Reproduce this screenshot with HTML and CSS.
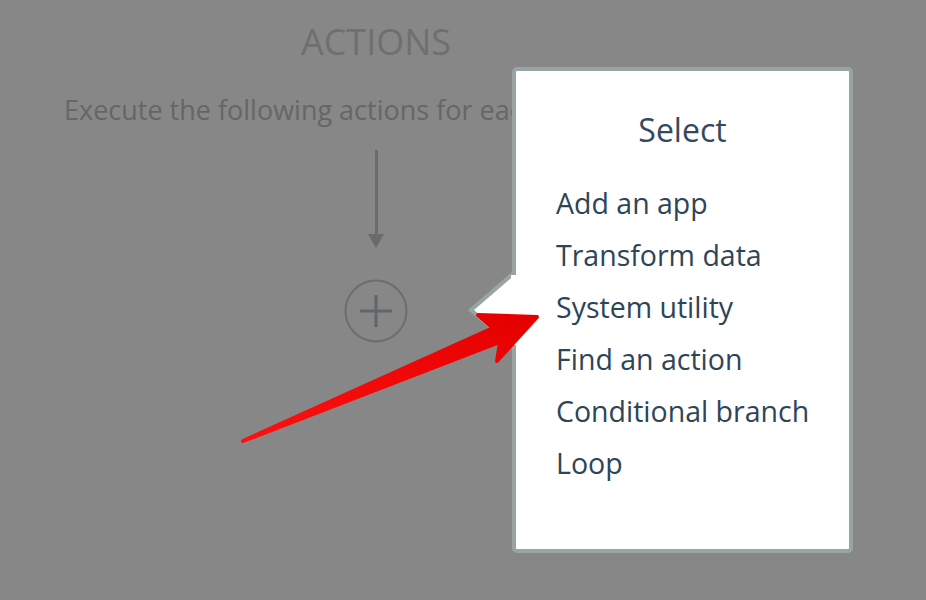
FILE: index.html
```html
<!DOCTYPE html>
<html>
<head>
<meta charset="utf-8">
<link rel="stylesheet" href="styles.css">
</head>
<body>
<div class="page">
  <section class="stage">
    <h1 class="stage-title">ACTIONS</h1>
    <p class="stage-desc">Execute the following actions for each item</p>
    <div class="connector">
      <div class="connector-line"></div>
      <div class="connector-head"></div>
    </div>
    <div class="add-btn">
      <svg width="64" height="64" viewBox="0 0 64 64"><circle cx="32" cy="32" r="30.5" fill="none" stroke="#696e72" stroke-width="2"/><path d="M16 32H48M32 16V48" stroke="#5f666c" stroke-width="3"/></svg>
    </div>
  </section>

  <div class="popup">
    <svg class="notch" width="54" height="96" viewBox="0 0 54 96"><path d="M48 11 L5 48 L48 85" fill="#fff" stroke="#99a4a5" stroke-width="4" stroke-linejoin="miter"/><rect x="45" y="13" width="9" height="70" fill="#fff"/></svg>
    <div class="popup-title">Select</div>
    <ul class="menu">
      <li>Add an app</li>
      <li>Transform data</li>
      <li>System utility</li>
      <li>Find an action</li>
      <li>Conditional branch</li>
      <li>Loop</li>
    </ul>
  </div>

  <svg class="annot" width="926" height="600" viewBox="0 0 926 600">
    <defs>
      <linearGradient id="rg" x1="0" y1="1" x2="1" y2="0">
        <stop offset="0" stop-color="#ff1010"/>
        <stop offset="1" stop-color="#e40000"/>
      </linearGradient>
    </defs>
    <polygon points="243,441 493,328 478,315 537,317 497,361 500,342" fill="url(#rg)" stroke="url(#rg)" stroke-width="4" stroke-linejoin="round"/>
  </svg>
</div>
</body>
</html>
```

FILE: styles.css
```css
html, body {
  margin: 0;
  padding: 0;
  background: #878787;
}
body {
  font-family: "Open Sans", "Noto Sans", sans-serif;
  width: 926px;
  height: 600px;
  overflow: hidden;
}
.page {
  position: relative;
  width: 926px;
  height: 600px;
}
.stage {
  width: 752px;
  padding-top: 22px;
  display: flex;
  flex-direction: column;
  align-items: center;
}
.stage-title {
  margin: 0;
  font-size: 36px;
  line-height: 40px;
  font-weight: 400;
  color: #6f6f6f;
}
.stage-desc {
  margin: 30px 0 0;
  align-self: flex-start;
  padding-left: 64px;
  font-size: 27px;
  line-height: 36px;
  color: #666666;
  white-space: nowrap;
}
.connector {
  margin-top: 22px;
  display: flex;
  flex-direction: column;
  align-items: center;
}
.connector-line {
  width: 3px;
  height: 84px;
  background: #6b6b6b;
}
.connector-head {
  width: 0;
  height: 0;
  border-left: 8px solid transparent;
  border-right: 8px solid transparent;
  border-top: 14px solid #6b6b6b;
}
.add-btn {
  margin-top: 31px;
  width: 64px;
  height: 64px;
}
.add-btn svg { display: block; }

.popup {
  position: absolute;
  left: 512px;
  top: 67px;
  width: 341px;
  height: 486px;
  box-sizing: border-box;
  border: 4px solid #99a4a5;
  border-radius: 5px;
  background: #fff;
  padding-top: 39px;
}
.notch {
  position: absolute;
  left: -50px;
  top: 191px;
}
.popup-title {
  text-align: center;
  font-size: 32px;
  line-height: 40px;
  color: #34495e;
}
.menu {
  list-style: none;
  margin: 27px 0 0;
  padding: 0 0 0 40px;
}
.menu li {
  font-size: 28.5px;
  line-height: 52px;
  color: #2e4558;
  white-space: nowrap;
}
.annot {
  position: absolute;
  left: 0;
  top: 0;
  pointer-events: none;
}
```
